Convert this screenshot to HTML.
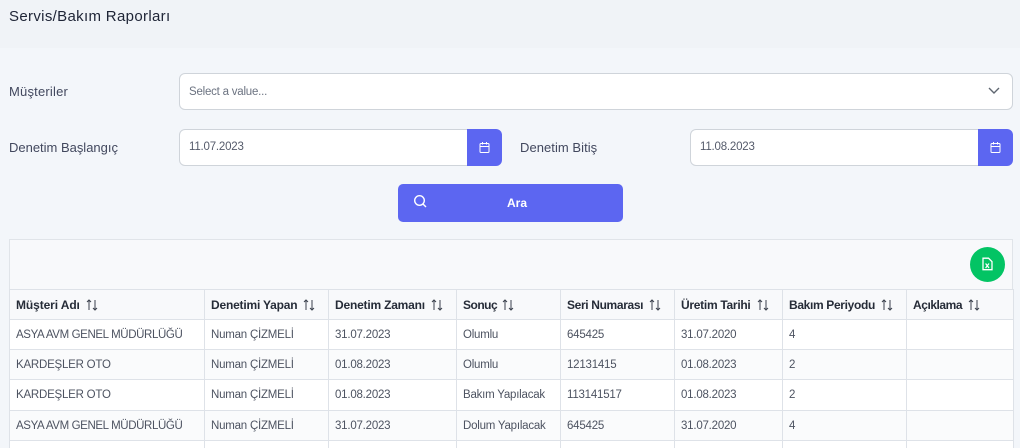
<!DOCTYPE html>
<html lang="tr">
<head>
<meta charset="utf-8">
<title>Servis/Bakım Raporları</title>
<style>
html,body{margin:0;padding:0;width:1020px;height:448px;overflow:hidden}
body{background:#f3f6fa;font-family:"Liberation Sans",sans-serif;position:relative}
.a{position:absolute;white-space:nowrap}
.head{left:0;top:0;width:1020px;height:48px;background:#f0f3f7}
.title{left:9px;top:7px;font-size:15px;line-height:20px;color:#1e2436;letter-spacing:.33px}
.lab{font-size:13px;line-height:18px;color:#42485e;letter-spacing:.05px}
.inp{box-sizing:border-box;background:#fff;border:1px solid #cfd4da;border-radius:6px;height:37px}
.val{font-size:11.5px;line-height:16px;color:#555b6b;letter-spacing:-.2px}
.cal{background:#5c66f1;width:35px;height:37px;border-radius:0 6px 6px 0}
.cal svg{position:absolute;left:11px;top:12px}
.btn{left:398px;top:184px;width:225px;height:38px;background:#5c66f1;border-radius:5px}
.card{box-sizing:border-box;left:9px;top:239px;width:1004px;height:50px;background:#f8f9fb;border:1px solid #e0e4e9;border-bottom:0}
.xl{left:970px;top:247px;width:35px;height:35px;border-radius:50%;background:#03c464}
table{position:absolute;left:9px;top:289px;border-collapse:collapse;table-layout:fixed;width:1004px;font-size:11.5px;letter-spacing:-.22px;color:#4d5361}
td,th{border:1px solid #dee2e8;padding:0 0 0 6px;text-align:left;white-space:nowrap;overflow:hidden;height:30px;box-sizing:border-box}
th{background:#f8f9fb;font-weight:700;color:#262c38;font-size:12px;letter-spacing:-.2px;height:30px}
tr.w td{background:#fff}
tr.g td{background:#fafbfc}
tr.t td{height:31px}
tr.e td{height:8px;font-size:0;line-height:0;border-bottom:0}
.n{letter-spacing:-.38px}
.s{display:inline-block;vertical-align:-2px;margin-left:5px}
</style>
</head>
<body>
<div class="a head"></div>
<div class="a title">Servis/Bakım Raporları</div>

<div class="a lab" style="left:9px;top:83px;letter-spacing:.2px">Müşteriler</div>
<div class="a inp" style="left:179px;top:73px;width:834px"></div>
<div class="a val" style="left:189px;top:84px;color:#6b7280;letter-spacing:-.22px">Select a value...</div>
<svg class="a" style="left:987px;top:85px" width="14" height="12" viewBox="0 0 14 12"><path d="M2 3l5 5 5-5" fill="none" stroke="#5f6670" stroke-width="1.4"/></svg>

<div class="a lab" style="left:9px;top:139px;letter-spacing:-.01px">Denetim Başlangıç</div>
<div class="a inp" style="left:179px;top:129px;width:290px;border-radius:6px 0 0 6px"></div>
<div class="a val" style="left:189px;top:139px">11.07.2023</div>
<div class="a cal" style="left:467px;top:129px"><svg width="13" height="13" viewBox="0 0 13 13" fill="none" stroke="#fff" stroke-width="1"><rect x="2" y="2.5" width="9" height="9" rx="1"/><path d="M2 5.5h9M4.500 1v2.500M8.500 1v2.500"/></svg></div>

<div class="a lab" style="left:520px;top:139px">Denetim Bitiş</div>
<div class="a inp" style="left:690px;top:129px;width:290px;border-radius:6px 0 0 6px"></div>
<div class="a val" style="left:700px;top:139px">11.08.2023</div>
<div class="a cal" style="left:978px;top:129px"><svg width="13" height="13" viewBox="0 0 13 13" fill="none" stroke="#fff" stroke-width="1"><rect x="2" y="2.5" width="9" height="9" rx="1"/><path d="M2 5.500h9M4.500 1v2.500M8.500 1v2.500"/></svg></div>

<div class="a btn"></div>
<svg class="a" style="left:413px;top:194px" width="15" height="15" viewBox="0 0 15 15" fill="none" stroke="#fff" stroke-width="1.4"><circle cx="6.500" cy="6.500" r="4.800"/><path d="M10 10l3 3"/></svg>
<div class="a" style="left:507px;top:195px;font-size:12px;line-height:16px;font-weight:700;color:#fff">Ara</div>

<div class="a card"></div>
<div class="a xl"></div>
<svg class="a" style="left:981px;top:257px" width="13" height="14" viewBox="0 0 13 14" fill="none"><path d="M2 1.200h5.500l3.500 3.500v8H2z" fill="#03c464" stroke="#fff" stroke-width="1.300"/><path d="M4.600 6.500l3.400 4.500M8 6.500l-3.400 4.500" stroke="#fff" stroke-width="1.200"/></svg>

<table>
<colgroup><col style="width:195px"><col style="width:124px"><col style="width:128px"><col style="width:104px"><col style="width:114px"><col style="width:108px"><col style="width:124px"><col style="width:107px"></colgroup>
<tr>
<th style="letter-spacing:-.1px">Müşteri Adı<svg class="s" width="14" height="12" viewBox="0 0 14 12" fill="none" stroke="#3a404c" stroke-width="1"><path d="M4 11V1M2 3l2-2 2 2M10 1v10M8 9l2 2 2-2"/></svg></th>
<th>Denetimi Yapan<svg class="s" width="14" height="12" viewBox="0 0 14 12" fill="none" stroke="#3a404c" stroke-width="1"><path d="M4 11V1M2 3l2-2 2 2M10 1v10M8 9l2 2 2-2"/></svg></th>
<th>Denetim Zamanı<svg class="s" width="14" height="12" viewBox="0 0 14 12" fill="none" stroke="#3a404c" stroke-width="1"><path d="M4 11V1M2 3l2-2 2 2M10 1v10M8 9l2 2 2-2"/></svg></th>
<th style="letter-spacing:-.5px">Sonuç<svg class="s" style="margin-left:3.500px" width="14" height="12" viewBox="0 0 14 12" fill="none" stroke="#3a404c" stroke-width="1"><path d="M4 11V1M2 3l2-2 2 2M10 1v10M8 9l2 2 2-2"/></svg></th>
<th style="letter-spacing:-.35px">Seri Numarası<svg class="s" width="14" height="12" viewBox="0 0 14 12" fill="none" stroke="#3a404c" stroke-width="1"><path d="M4 11V1M2 3l2-2 2 2M10 1v10M8 9l2 2 2-2"/></svg></th>
<th style="letter-spacing:-.28px">Üretim Tarihi<svg class="s" width="14" height="12" viewBox="0 0 14 12" fill="none" stroke="#3a404c" stroke-width="1"><path d="M4 11V1M2 3l2-2 2 2M10 1v10M8 9l2 2 2-2"/></svg></th>
<th style="letter-spacing:-.34px">Bakım Periyodu<svg class="s" width="14" height="12" viewBox="0 0 14 12" fill="none" stroke="#3a404c" stroke-width="1"><path d="M4 11V1M2 3l2-2 2 2M10 1v10M8 9l2 2 2-2"/></svg></th>
<th style="letter-spacing:-.45px">Açıklama<svg class="s" width="14" height="12" viewBox="0 0 14 12" fill="none" stroke="#3a404c" stroke-width="1"><path d="M4 11V1M2 3l2-2 2 2M10 1v10M8 9l2 2 2-2"/></svg></th>
</tr>
<tr class="w"><td class="n">ASYA AVM GENEL MÜDÜRLÜĞÜ</td><td>Numan ÇİZMELİ</td><td>31.07.2023</td><td>Olumlu</td><td>645425</td><td>31.07.2020</td><td>4</td><td></td></tr>
<tr class="g"><td>KARDEŞLER OTO</td><td>Numan ÇİZMELİ</td><td>01.08.2023</td><td>Olumlu</td><td>12131415</td><td>01.08.2023</td><td>2</td><td></td></tr>
<tr class="w t"><td>KARDEŞLER OTO</td><td>Numan ÇİZMELİ</td><td>01.08.2023</td><td>Bakım Yapılacak</td><td>113141517</td><td>01.08.2023</td><td>2</td><td></td></tr>
<tr class="g"><td class="n">ASYA AVM GENEL MÜDÜRLÜĞÜ</td><td>Numan ÇİZMELİ</td><td>31.07.2023</td><td>Dolum Yapılacak</td><td>645425</td><td>31.07.2020</td><td>4</td><td></td></tr>
<tr class="w e"><td></td><td></td><td></td><td></td><td></td><td></td><td></td><td></td></tr>
</table>
</body>
</html>
